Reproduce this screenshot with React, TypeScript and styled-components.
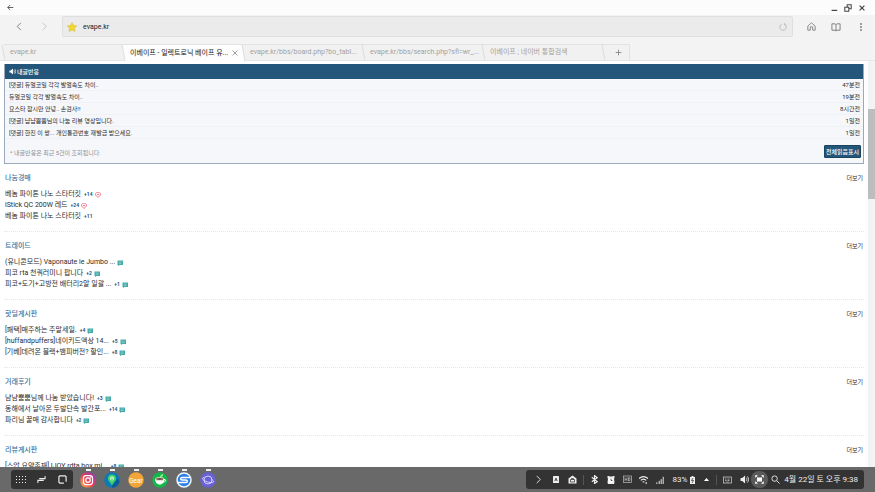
import React from "react";
import styled, { createGlobalStyle, css } from "styled-components";

const GlobalStyle = createGlobalStyle`
  * { box-sizing: border-box; }
  html, body { margin: 0; padding: 0; overflow: hidden; }
  body {
    background: #fff;
    color: #2b2b2b;
    font-family: Roboto, "Noto Sans CJK KR", sans-serif;
    font-size: 7px;
    line-height: 11px;
  }
  button, input { font: inherit; color: inherit; margin: 0; padding: 0; border: 0; background: none; }
  a { color: inherit; text-decoration: none; }
  h2, h3, p, ul { margin: 0; padding: 0; font-size: inherit; font-weight: inherit; list-style: none; }
  svg { display: block; flex: none; }
`;

const Screen = styled.div`
  display: flex;
  flex-direction: column;
  height: 100vh;
  overflow: hidden;
`;

const TitleBar = styled.header`
  display: flex;
  align-items: center;
  height: 15px;
  padding: 0 6px;
  background: #fcfcfc;
  color: #444;
  flex: none;
`;

const IconButton = styled.button<{ $w?: number; $tone?: string }>`
  display: flex;
  align-items: center;
  justify-content: center;
  width: ${(p) => p.$w ?? 14}px;
  height: 14px;
  color: ${(p) => p.$tone ?? "inherit"};
  flex: none;
`;

const Spacer = styled.span`
  flex: 1;
`;

const Toolbar = styled.div`
  display: flex;
  align-items: center;
  height: 29px;
  padding: 1px 7px 7px 12px;
  background: #f3f3f3;
  color: #777;
  flex: none;
`;

const NavButtons = styled.div`
  display: flex;
  gap: 11px;
  width: 50px;
`;

const AddressBar = styled.form`
  display: flex;
  align-items: center;
  flex: 1;
  height: 21px;
  margin-right: 11px;
  padding: 0 2px 0 4px;
  background: #ebebeb;
  border: 1px solid #dfdfdf;
  border-radius: 2px;
`;

const AddressInput = styled.input`
  flex: 1;
  min-width: 0;
  height: 14px;
  padding-left: 6px;
  color: #222;
  outline: none;
`;

const ToolButtons = styled.div`
  display: flex;
  gap: 11px;
`;

const TabStrip = styled.nav`
  display: flex;
  height: 17px;
  padding: 0 4px;
  background: #f3f3f3;
  border-bottom: 1px solid #e6e6e6;
  color: #a2a2a2;
  flex: none;
`;

const Tab = styled.div<{ $active?: boolean }>`
  position: relative;
  display: flex;
  align-items: center;
  width: 120px;
  padding: 0 3px 0 6px;
  border-top: 1px solid #e2e2e2;
  background: #f1f1f1;
  &::before {
    content: "";
    position: absolute;
    top: 0;
    bottom: 0;
    left: -1px;
    width: 3px;
    border-left: 1px solid #dcdcdc;
    transform: skewX(10deg);
    background: inherit;
  }
  ${(p) =>
    p.$active &&
    css`
      height: 17px;
      background: #fdfdfd;
      color: #222;
    `}
`;

const TabLabel = styled.button`
  position: relative;
  flex: 1;
  text-align: left;
  white-space: nowrap;
`;

const NewTab = styled(Tab)`
  width: 26px;
  justify-content: center;
  border-right: 1px solid #e2e2e2;
  color: #888;
`;

const Viewport = styled.div`
  display: flex;
  flex: 1;
  min-height: 0;
  overflow: hidden;
`;

const Page = styled.main`
  flex: 1;
  min-width: 0;
  padding: 3px 4px 0;
`;

const ScrollTrack = styled.div`
  width: 7px;
  padding-top: 48px;
  background: #f3f3f3;
`;

const ScrollThumb = styled.div`
  height: 90px;
  background: #bdbdbd;
`;

const Panel = styled.section`
  border: 1px solid #9aa9bc;
  border-top: 0;
  background: #f5f7fb;
  font-size: 6px;
`;

const PanelHeader = styled.h2`
  display: flex;
  align-items: center;
  gap: 1px;
  height: 15px;
  padding-left: 4px;
  background: #23567a;
  color: #fff;
  font-weight: 500;
`;

const ReactionRow = styled.li`
  display: flex;
  justify-content: space-between;
  align-items: center;
  height: 12px;
  padding: 0 3px 0 4px;
  border-bottom: 1px solid #eff1f5;
`;

const PanelFooter = styled.footer`
  display: flex;
  justify-content: space-between;
  align-items: flex-end;
  height: 24px;
  padding: 0 2px 5px 5px;
  color: #8b8e94;
`;

const MarkReadButton = styled.button`
  height: 13px;
  padding: 0 1px;
  border: 1px solid #1b455f;
  border-radius: 1px;
  background: #23567a;
  color: #fff;
  font-weight: 500;
  line-height: 11px;
`;

const Board = styled.section`
  height: 68px;
  padding: 9px 1px 0 1px;
  border-bottom: 1px dotted #e6e6e6;
`;

const BoardHeader = styled.div`
  display: flex;
  justify-content: space-between;
  margin-bottom: 5px;
`;

const BoardTitle = styled.h3`
  color: #41709b;
  font-weight: 500;
`;

const MoreLink = styled.a`
  font-size: 6px;
  line-height: 10px;
`;

const Post = styled.li`
  display: flex;
  align-items: center;
  height: 11px;
  white-space: nowrap;
`;

const Count = styled.span`
  margin-left: 3px;
  color: #29577f;
  font-size: 5px;
  font-weight: 700;
`;

const Marker = styled.span`
  margin-left: 2px;
`;

const TaskBar = styled.footer`
  display: flex;
  align-items: center;
  height: 25px;
  padding: 0 11px;
  background: #696969;
  color: #eee;
  flex: none;
`;

const Dock = styled.div`
  display: flex;
  align-items: center;
  justify-content: space-around;
  width: 62px;
  height: 19px;
  border-radius: 3px;
  background: #333;
`;

const Apps = styled.div`
  display: flex;
  gap: 8px;
  margin-left: 7px;
`;

const AppButton = styled.button`
  display: flex;
  flex-direction: column;
  align-items: center;
  width: 16px;
  height: 23px;
  &::before {
    content: "";
    width: 5px;
    height: 2px;
    margin: 1px 0;
    background: #eee;
  }
`;

const Tray = styled.div`
  display: flex;
  align-items: center;
  height: 19px;
  padding: 0 6px 0 3px;
  border-radius: 3px;
  background: #333;
`;

const TrayItem = styled.button<{ $w: number; $round?: boolean }>`
  display: flex;
  align-items: center;
  justify-content: center;
  width: ${(p) => p.$w}px;
  height: 17px;
  flex: none;
  ${(p) =>
    p.$round &&
    css`
      border-radius: 8px;
      background: #5a5a5a;
    `}
`;

const Divider = styled.span`
  width: 1px;
  height: 10px;
  background: #555;
`;

const Battery = styled.span`
  margin: 0 2px 0 4px;
  font-size: 8px;
`;

const Clock = styled.time`
  margin-left: 1px;
  font-size: 8px;
  white-space: nowrap;
`;

type StrokeProps = { d: string; size?: number; width?: number; box?: number };
const Stroke = ({ d, size = 8, width = 1, box = 10 }: StrokeProps) => (
  <svg width={size} height={size} viewBox={`0 0 ${box} ${box}`} fill="none" stroke="currentColor" strokeWidth={width}>
    <path d={d} />
  </svg>
);

const Heart = () => (
  <svg width="6" height="6" viewBox="0 0 12 12" fill="#fff0f2" stroke="#ee6c7e" strokeWidth="1.600">
    <path d="M6 11 1 6V3l2-2h2l1 1 1-1h2l2 2v3z" />
    <path d="M4 5h4" />
  </svg>
);

const Comment = () => (
  <svg width="6" height="6" viewBox="0 0 12 12">
    <path d="M1 1h11v9H5l-3 2v-2H1z" fill="#45aba7" />
    <path d="M3.500 4h6M3.500 7h5" stroke="#b5e2df" strokeWidth="1" />
  </svg>
);

const Star = () => (
  <svg width="10" height="10" viewBox="0 0 20 20">
    <path d="m10 1 2.900 5.900 6.500.9-4.700 4.600 1.100 6.500L10 15.800l-5.800 3.100 1.100-6.500L.6 7.800l6.500-.9z" fill="#f3d72e" stroke="#d5b42a" strokeWidth="1" />
  </svg>
);

const Speaker = ({ size = 8 }: { size?: number }) => (
  <svg width={size} height={size} viewBox="0 0 16 16" fill="currentColor">
    <path d="M1 5.500h3L9 1v14l-5-4.500H1z" />
    <path d="M11 5c1.600 1.500 1.600 4.500 0 6M13 2.500c3 3 3 8 0 11" fill="none" stroke="currentColor" strokeWidth="1.500" />
  </svg>
);

const AppIcon = ({ children }: { children: React.ReactNode }) => (
  <svg width="16" height="16" viewBox="0 0 32 32">
    {children}
  </svg>
);

const Instagram = () => (
  <AppIcon>
    <defs>
      <linearGradient id="ig" x1="0" y1="1" x2="1" y2="0">
        <stop offset="0" stopColor="#fbc34a" />
        <stop offset=".45" stopColor="#ed3f52" />
        <stop offset="1" stopColor="#8c37c4" />
      </linearGradient>
    </defs>
    <rect x="1" y="1" width="30" height="30" rx="12" fill="url(#ig)" />
    <rect x="7" y="7" width="18" height="18" rx="5" fill="none" stroke="#fff" strokeWidth="2.500" />
    <circle cx="16" cy="16" r="4.500" fill="none" stroke="#fff" strokeWidth="2.500" />
    <circle cx="21.500" cy="10.500" r="1.300" fill="#fff" />
  </AppIcon>
);

const MapPin = () => (
  <AppIcon>
    <circle cx="16" cy="16" r="15.500" fill="#0879b9" />
    <path d="m16 26 12-13 3 6c-2 8-8 12-15 12z" fill="#075d9b" />
    <path d="M16 28c-2-7-8-9-8-15a8 8 0 0 1 16 0c0 6-6 8-8 15z" fill="#40d06b" />
    <circle cx="16" cy="13" r="4" fill="#d8ffd3" />
    <path d="m16 11 2 4h-4z" fill="#28a956" />
  </AppIcon>
);

const Gear = () => (
  <AppIcon>
    <circle cx="16" cy="16" r="15.500" fill="#f3a638" />
    <text x="16" y="21" textAnchor="middle" fontFamily="Roboto, sans-serif" fontSize="13" fill="#fff">
      Gear
    </text>
  </AppIcon>
);

const Cafe = () => (
  <AppIcon>
    <circle cx="16" cy="16" r="15.500" fill="#13b84a" />
    <path d="M6 14h19c0 6-4 11-9.500 11S6 20 6 14z" fill="#fff" />
    <path d="M24 15c5-1 4 5-1 5" fill="none" stroke="#fff" strokeWidth="2" />
    <ellipse cx="15.500" cy="14" rx="8.500" ry="3" fill="#704b3b" stroke="#fff" strokeWidth="1.500" />
    <path d="M16 11c0-4 2-6 6-7 1 4-2 6-6 7z" fill="#a5f08f" />
  </AppIcon>
);

const SLogo = () => (
  <AppIcon>
    <circle cx="16" cy="16" r="15.500" fill="#eef6ff" />
    <circle cx="16" cy="16" r="12.500" fill="#2f80e4" />
    <path d="M28 11H13c-5 0-5 5 0 5h6c5 0 5 5 0 5H4" fill="none" stroke="#fff" strokeWidth="3" />
  </AppIcon>
);

const Planet = () => (
  <AppIcon>
    <circle cx="16" cy="16" r="15.500" fill="#6862d4" />
    <circle cx="16" cy="16" r="8" fill="none" stroke="#dcd9ff" strokeWidth="1.800" />
    <path d="M8 11c-9 2 4 10 14 10 9 0 5-4 1-6" fill="none" stroke="#dcd9ff" strokeWidth="1.800" />
  </AppIcon>
);

const apps = [
  { name: "Instagram", icon: <Instagram /> },
  { name: "Maps", icon: <MapPin /> },
  { name: "Gear", icon: <Gear /> },
  { name: "Cafe", icon: <Cafe /> },
  { name: "S", icon: <SLogo /> },
  { name: "Internet", icon: <Planet /> },
];

const reactions = [
  ["[댓글] 듀얼코일 각각 발열속도 차이..", "47분전"],
  ["듀얼코일 각각 발열속도 차이..", "19분전"],
  ["요스타 잠시만 안녕.. 손검사!!", "8시간전"],
  ["[댓글] 냠냠뿜뿜님의 나눔 리뷰 영상입니다.", "1일전"],
  ["[댓글] 한진 이 쌍... 개인통관번호 재발급 받으세요.", "1일전"],
];

type PostData = { text: string; count?: string; mark?: "heart" | "comment" };
const boards: { title: string; posts: PostData[] }[] = [
  {
    title: "나눔경매",
    posts: [
      { text: "베놈 파이톤 나노 스타터킷", count: "+14", mark: "heart" },
      { text: "iStick QC 200W 레드", count: "+24", mark: "heart" },
      { text: "베놈 파이톤 나노 스타터킷", count: "+11" },
    ],
  },
  {
    title: "트레이드",
    posts: [
      { text: "(유니콘모드) Vaponaute le Jumbo ...", mark: "comment" },
      { text: "피코 rta 천쿼러미니 팝니다", count: "+2", mark: "comment" },
      { text: "피코+도기+고방전 배터리2알 일괄 ...", count: "+1", mark: "comment" },
    ],
  },
  {
    title: "핫딜게시판",
    posts: [
      { text: "[패택]매주하는 주말세일.", count: "+4", mark: "comment" },
      { text: "[huffandpuffers]네이키드액상 14...", count: "+5", mark: "comment" },
      { text: "[기베]데려온 블랙+뱀피버전? 할인...", count: "+8", mark: "comment" },
    ],
  },
  {
    title: "거래후기",
    posts: [
      { text: "냠냠뿜뿜님께 나눔 받았습니다!", count: "+3", mark: "comment" },
      { text: "동해에서 날아온 두발단속 발간포...", count: "+14", mark: "comment" },
      { text: "파리님 꿀매 감사합니다", count: "+2", mark: "comment" },
    ],
  },
  {
    title: "리뷰게시판",
    posts: [{ text: "[스압 요약존재] IJOY rdta box mi...", count: "+8", mark: "comment" }],
  },
];

export default function App() {
  return (
    <Screen>
      <GlobalStyle />
      <TitleBar>
        <IconButton $w={8} aria-label="Back">
          <Stroke d="M9 5H1M4.500 1.500 1 5l3.500 3.500" size={7} width={1.2} />
        </IconButton>
        <Spacer />
        <IconButton aria-label="Minimize">
          <Stroke d="M2 8h7" width={1.5} />
        </IconButton>
        <IconButton aria-label="Restore">
          <Stroke d="M1 4h5v5H1zM4 4V1h5v5H6" width={1.3} />
        </IconButton>
        <IconButton aria-label="Close">
          <Stroke d="m2 2 6 6M8 2 2 8" width={1.5} />
        </IconButton>
      </TitleBar>
      <Toolbar>
        <NavButtons>
          <IconButton aria-label="Previous page">
            <Stroke d="M6.500 1 2.500 5l4 4" size={9} />
          </IconButton>
          <IconButton $tone="#c4c4c4" aria-label="Next page">
            <Stroke d="m3 1 4 4-4 4" size={9} />
          </IconButton>
        </NavButtons>
        <AddressBar onSubmit={(e) => e.preventDefault()}>
          <IconButton $w={10} type="button" aria-label="Bookmark">
            <Star />
          </IconButton>
          <AddressInput aria-label="Address" defaultValue="evape.kr" />
          <IconButton type="button" $tone="#b4b4b4" aria-label="Reload">
            <Stroke d="M3.500 1.500a4 4 0 1 0 4 .5M7 0v2.500h2" />
          </IconButton>
        </AddressBar>
        <ToolButtons>
          <IconButton aria-label="Home">
            <Stroke d="M1 5 5.500 1 10 5v5H7V6H4v4H1z" size={9} box={11} />
          </IconButton>
          <IconButton aria-label="Bookmarks">
            <Stroke d="M1 2h3.500l1 1 1-1H10v7H6.500l-1 1-1-1H1zM5.500 3v7" size={10} box={11} />
          </IconButton>
          <IconButton aria-label="More">
            <svg width="8" height="8" viewBox="0 0 8 8" fill="currentColor">
              <circle cx="4" cy="1" r="0.900" />
              <circle cx="4" cy="4" r="0.900" />
              <circle cx="4" cy="7" r="0.900" />
            </svg>
          </IconButton>
        </ToolButtons>
      </Toolbar>
      <TabStrip>
        <Tab>
          <TabLabel>evape.kr</TabLabel>
        </Tab>
        <Tab $active>
          <TabLabel>이베이프 - 일렉트로닉 베이프 유...</TabLabel>
          <IconButton $w={12} $tone="#777" aria-label="Close tab">
            <Stroke d="m1 1 8 8M9 1 1 9" size={6} width={1.2} />
          </IconButton>
        </Tab>
        <Tab>
          <TabLabel>evape.kr/bbs/board.php?bo_tabl...</TabLabel>
        </Tab>
        <Tab>
          <TabLabel>evape.kr/bbs/search.php?sfl=wr_...</TabLabel>
        </Tab>
        <Tab>
          <TabLabel>이베이프 ; 네이버 통합검색</TabLabel>
        </Tab>
        <NewTab>
          <IconButton aria-label="New tab">
            <Stroke d="M5 1v8M1 5h8" size={7} width={1.3} />
          </IconButton>
        </NewTab>
      </TabStrip>
      <Viewport>
        <Page>
          <Panel>
            <PanelHeader>
              <Speaker size={7} />
              내글반응
            </PanelHeader>
            <ul>
              {reactions.map(([text, time]) => (
                <ReactionRow key={text}>
                  <a href="#post">{text}</a>
                  <time>{time}</time>
                </ReactionRow>
              ))}
            </ul>
            <PanelFooter>
              <p>* 내글반응은 최근 5건이 조회됩니다.</p>
              <MarkReadButton>전체읽음표시</MarkReadButton>
            </PanelFooter>
          </Panel>
          {boards.map((board) => (
            <Board key={board.title}>
              <BoardHeader>
                <BoardTitle>{board.title}</BoardTitle>
                <MoreLink href="#more">더보기</MoreLink>
              </BoardHeader>
              <ul>
                {board.posts.map((post, i) => (
                  <Post key={i}>
                    <a href="#post">{post.text}</a>
                    {post.count && <Count>{post.count}</Count>}
                    {post.mark && <Marker>{post.mark === "heart" ? <Heart /> : <Comment />}</Marker>}
                  </Post>
                ))}
              </ul>
            </Board>
          ))}
        </Page>
        <ScrollTrack>
          <ScrollThumb />
        </ScrollTrack>
      </Viewport>
      <TaskBar>
        <Dock>
          <IconButton aria-label="Apps">
            <svg width="10" height="10" viewBox="0 0 10 10" fill="currentColor">
              {[1, 4, 7].map((y) => [0, 3, 6, 9].map((x) => <rect key={`${x}-${y}`} x={x} y={y} width="1" height="1" />))}
            </svg>
          </IconButton>
          <IconButton aria-label="Recents">
            <Stroke d="M9 1v3H2.500M1 9V6h6.500" size={9} width={1.2} />
          </IconButton>
          <IconButton aria-label="Desktop home">
            <Stroke d="M6.500 9H2L1 8V2l1-1h6l1 1v5.500" size={9} width={1.3} />
          </IconButton>
        </Dock>
        <Apps>
          {apps.map((app) => (
            <AppButton key={app.name} aria-label={app.name}>
              {app.icon}
            </AppButton>
          ))}
        </Apps>
        <Spacer />
        <Tray>
          <TrayItem $w={18} aria-label="Collapse">
            <Stroke d="m3 1 4 4-4 4" size={9} />
          </TrayItem>
          <TrayItem $w={17} aria-label="Input language">
            <svg width="6" height="7" viewBox="0 0 12 14">
              <rect width="12" height="14" rx="1" fill="#eee" />
              <path d="m3.500 10 2.500-6 2.500 6M4.500 8h3" fill="none" stroke="#333" strokeWidth="1.500" />
            </svg>
          </TrayItem>
          <TrayItem $w={16} aria-label="Secure home">
            <svg width="9" height="9" viewBox="0 0 18 18">
              <path d="m9 1 8 6v10H1V7z" fill="#eee" />
              <path d="M5 14V9h8v5zM7 9V7h4v2" fill="none" stroke="#333" strokeWidth="1.500" />
            </svg>
          </TrayItem>
          <TrayItem $w={6} aria-hidden="true">
            <Divider />
          </TrayItem>
          <TrayItem $w={16} aria-label="Bluetooth">
            <Stroke d="m2 2.500 6 5L5 9.500v-9L8 3 2 7.500" size={9} width={1.3} />
          </TrayItem>
          <TrayItem $w={17} aria-label="Alarm">
            <svg width="8" height="8" viewBox="0 0 16 16">
              <path d="M1 0h3l1 1h6l1-1h3v4l-1 1 1 8-1 3H2l-1-3 1-8-1-1z" fill="#eee" />
              <circle cx="8" cy="8.500" r="5" fill="#fff" />
              <path d="M8 5v4h3" fill="none" stroke="#333" strokeWidth="1.500" />
            </svg>
          </TrayItem>
          <TrayItem $w={16} aria-label="HD call">
            <svg width="9" height="9" viewBox="0 0 18 18" fill="none" stroke="#b5b5b5" strokeWidth="1.500">
              <rect x="1" y="2" width="16" height="13" />
              <path d="M4 5v7M8 5v7M4 8.500h4M11 5v7l3-1V6z" />
            </svg>
          </TrayItem>
          <TrayItem $w={17} aria-label="Wi-Fi">
            <Stroke d="M0 4c3-3 7-3 10 0M2 6c2-2 4-2 6 0M4 8c1-1 1-1 2 0M8 8v2" size={9} width={1.3} />
          </TrayItem>
          <TrayItem $w={16} aria-label="Signal">
            <Stroke d="M1 10V8M4 10V6M6.500 10V4M9 10V1" size={8} width={1.2} />
          </TrayItem>
          <Battery>83%</Battery>
          <TrayItem $w={7} aria-label="Charging">
            <svg width="5" height="8" viewBox="0 0 10 16">
              <path d="M3 0h4v2h3v14H0V2h3z" fill="#eee" />
              <path d="M6 4 3 9h4l-3 5" fill="none" stroke="#333" strokeWidth="1.500" />
            </svg>
          </TrayItem>
          <TrayItem $w={20} aria-label="Show more">
            <svg width="5" height="3" viewBox="0 0 5 3">
              <path d="M2.500 0 5 3H0z" fill="#fff" />
            </svg>
          </TrayItem>
          <Divider />
          <TrayItem $w={20} aria-label="Keyboard">
            <svg width="9" height="8" viewBox="0 0 18 16" fill="none" stroke="#ccc">
              <rect x="1" y="2" width="16" height="12" strokeWidth="1.500" />
              <path d="M4 6h10M4 9h10" strokeWidth="1.500" strokeDasharray="2 1" />
              <path d="M6 12h6" />
            </svg>
          </TrayItem>
          <TrayItem $w={14} aria-label="Volume">
            <Speaker size={9} />
          </TrayItem>
          <TrayItem $w={17} $round aria-label="Screenshot">
            <svg width="9" height="9" viewBox="0 0 18 18">
              <path d="M1 5V1h4M13 1h4v4M17 13v4h-4M5 17H1v-4M2 2l3 3M16 2l-3 3M2 16l3-3M16 16l-3-3" fill="none" stroke="#fff" strokeWidth="1.600" />
              <rect x="4" y="5" width="10" height="8" fill="#fff" />
            </svg>
          </TrayItem>
          <TrayItem $w={15} aria-label="Search">
            <Stroke d="M7 4a3 3 0 1 1-6 0 3 3 0 0 1 6 0zM6.500 6.500 9.500 9.500" size={9} />
          </TrayItem>
          <Clock>4월 22일 토 오후 9:38</Clock>
        </Tray>
      </TaskBar>
    </Screen>
  );
}
